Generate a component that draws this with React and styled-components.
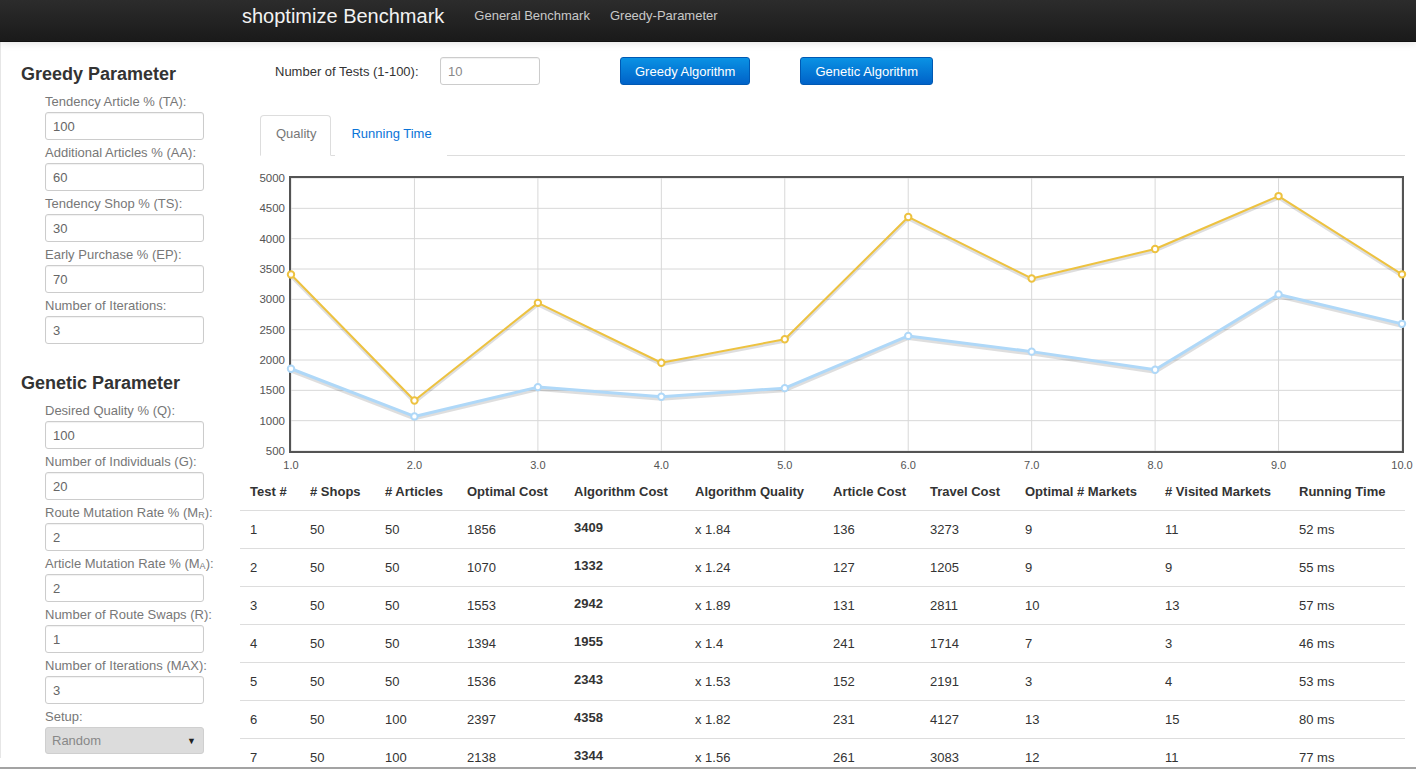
import React, { useState } from "react";
import styled, { createGlobalStyle } from "styled-components";

const GlobalStyle = createGlobalStyle`
  html, body {
    margin: 0;
    padding: 0;
    background: #fff;
    font-family: "Liberation Sans", Arial, sans-serif;
    font-size: 13px;
    color: #333;
  }
`;

const greedyFields = [
  { label: "Tendency Article % (TA):", value: "100" },
  { label: "Additional Articles % (AA):", value: "60" },
  { label: "Tendency Shop % (TS):", value: "30" },
  { label: "Early Purchase % (EP):", value: "70" },
  { label: "Number of Iterations:", value: "3" },
];

const geneticFields = [
  { label: "Desired Quality % (Q):", value: "100" },
  { label: "Number of Individuals (G):", value: "20" },
  { label: <>Route Mutation Rate % (M<sub>R</sub>):</>, value: "2" },
  { label: <>Article Mutation Rate % (M<sub>A</sub>):</>, value: "2" },
  { label: "Number of Route Swaps (R):", value: "1" },
  { label: "Number of Iterations (MAX):", value: "3" },
];

const columns = [
  { title: "Test #", width: 60 },
  { title: "# Shops", width: 75 },
  { title: "# Articles", width: 82 },
  { title: "Optimal Cost", width: 107 },
  { title: "Algorithm Cost", width: 121 },
  { title: "Algorithm Quality", width: 138 },
  { title: "Article Cost", width: 97 },
  { title: "Travel Cost", width: 95 },
  { title: "Optimal # Markets", width: 140 },
  { title: "# Visited Markets", width: 134 },
  { title: "Running Time", width: 116 },
];

// rows visible in the window
const rows = [
  [1, 50, 50, 1856, 3409, "x 1.84", 136, 3273, 9, 11, "52 ms"],
  [2, 50, 50, 1070, 1332, "x 1.24", 127, 1205, 9, 9, "55 ms"],
  [3, 50, 50, 1553, 2942, "x 1.89", 131, 2811, 10, 13, "57 ms"],
  [4, 50, 50, 1394, 1955, "x 1.4", 241, 1714, 7, 3, "46 ms"],
  [5, 50, 50, 1536, 2343, "x 1.53", 152, 2191, 3, 4, "53 ms"],
  [6, 50, 100, 2397, 4358, "x 1.82", 231, 4127, 13, 15, "80 ms"],
  [7, 50, 100, 2138, 3344, "x 1.56", 261, 3083, 12, 11, "77 ms"],
];

// chart series for all 10 tests
const algorithmCosts = [3409, 1332, 2942, 1955, 2343, 4358, 3344, 3830, 4702, 3412];
const optimalCosts = [1856, 1070, 1553, 1394, 1536, 2397, 2138, 1840, 3081, 2596];

// chart geometry (svg coords)
const PL = 51;
const PR = 1162;
const PT = 12;
const PB = 285;
const xPos = (i) => PL + ((PR - PL) * i) / 9;
const yPos = (v) => PT + ((5000 - v) * (PB - PT)) / 4500;
const yTicks = [5000, 4500, 4000, 3500, 3000, 2500, 2000, 1500, 1000, 500];

function Series({ data, color, width }) {
  const pts = data.map((v, i) => `${xPos(i)},${yPos(v)}`).join(" ");
  return (
    <g>
      <polyline points={pts} fill="none" stroke="rgba(0,0,0,0.13)" strokeWidth={width + 1} transform="translate(0,2)" strokeLinejoin="round" />
      <polyline points={pts} fill="none" stroke={color} strokeWidth={width} strokeLinejoin="round" />
      {data.map((v, i) => (
        <circle key={i} cx={xPos(i)} cy={yPos(v)} r="3.2" fill="#fff" stroke={color} strokeWidth="2" />
      ))}
    </g>
  );
}

function QualityChart() {
  return (
    <ChartSvg width="1165" height="307" viewBox="0 0 1165 307">
      {yTicks.map((t) => (
        <g key={t}>
          <line x1={PL} x2={PR} y1={yPos(t)} y2={yPos(t)} stroke="#d8d8d8" strokeWidth="1" />
          <text x="45" y={yPos(t) + 4} textAnchor="end" fontSize="11.5" fill="#545454">
            {t}
          </text>
        </g>
      ))}
      {Array.from({ length: 10 }).map((_, i) => (
        <g key={i}>
          <line x1={xPos(i)} x2={xPos(i)} y1={PT} y2={PB} stroke="#d8d8d8" strokeWidth="1" />
          <text x={xPos(i)} y="303" textAnchor="middle" fontSize="11" fill="#545454">
            {(i + 1).toFixed(1)}
          </text>
        </g>
      ))}
      <rect x={PL - 1} y={PT - 1} width={PR - PL + 2} height={PB - PT + 2} fill="none" stroke="#545454" strokeWidth="2" />
      <Series data={algorithmCosts} color="#edc240" width={2} />
      <Series data={optimalCosts} color="#afd8f8" width={3} />
    </ChartSvg>
  );
}

function Field({ label, value }) {
  return (
    <FieldGroup>
      <FieldLabel>{label}</FieldLabel>
      <TextInput defaultValue={value} />
    </FieldGroup>
  );
}

export default function App() {
  const [tab, setTab] = useState("quality");
  return (
    <Page>
      <GlobalStyle />
      <Navbar>
        <Brand>shoptimize Benchmark</Brand>
        <NavLinks>
          <NavLink>General Benchmark</NavLink>
          <NavLink>Greedy-Parameter</NavLink>
        </NavLinks>
      </Navbar>
      <Body>
        <Sidebar>
          <SideHeading>Greedy Parameter</SideHeading>
          <FieldList>
            {greedyFields.map((f, i) => (
              <Field key={i} {...f} />
            ))}
          </FieldList>
          <SideHeading $spaced>Genetic Parameter</SideHeading>
          <FieldList>
            {geneticFields.map((f, i) => (
              <Field key={i} {...f} />
            ))}
            <FieldGroup>
              <FieldLabel>Setup:</FieldLabel>
              <SelectBox>
                <span>Random</span>
                <Caret>▼</Caret>
              </SelectBox>
            </FieldGroup>
          </FieldList>
        </Sidebar>
        <Main>
          <Controls>
            <ControlLabel>Number of Tests (1-100):</ControlLabel>
            <TestsInput defaultValue="10" />
            <PrimaryButton $ml={80}>Greedy Algorithm</PrimaryButton>
            <PrimaryButton $ml={50}>Genetic Algorithm</PrimaryButton>
          </Controls>
          <Tabs>
            <Tab $active={tab === "quality"} onClick={() => setTab("quality")}>
              Quality
            </Tab>
            <Tab $active={tab === "time"} onClick={() => setTab("time")}>
              Running Time
            </Tab>
          </Tabs>
          <QualityChart />
          <Table>
            <colgroup>
              {columns.map((c) => (
                <col key={c.title} style={{ width: c.width }} />
              ))}
            </colgroup>
            <thead>
              <tr>
                {columns.map((c) => (
                  <Th key={c.title}>{c.title}</Th>
                ))}
              </tr>
            </thead>
            <tbody>
              {rows.map((r) => (
                <tr key={r[0]}>
                  {r.map((cell, i) => (
                    <Td key={i}>{i === 4 ? <Strong>{cell}</Strong> : cell}</Td>
                  ))}
                </tr>
              ))}
            </tbody>
          </Table>
        </Main>
      </Body>
    </Page>
  );
}

const Page = styled.div`
  height: 769px;
  overflow: hidden;
  box-sizing: border-box;
  border-bottom: 2px solid #a3a3a3;
`;

const Navbar = styled.div`
  height: 42px;
  box-sizing: border-box;
  padding: 4px 0 0 242px;
  display: flex;
  align-items: flex-start;
  background: linear-gradient(to bottom, #2c2c2c, #1a1a1a);
  border-bottom: 1px solid #111;
  box-shadow: 0 1px 8px rgba(0, 0, 0, 0.12);
  position: relative;
  z-index: 1;
`;

const Brand = styled.div`
  font-size: 20px;
  line-height: 24px;
  color: #f2f2f2;
`;

const NavLinks = styled.div`
  display: flex;
  margin-left: 20px;
`;

const NavLink = styled.a`
  padding: 0 10px;
  font-size: 13px;
  line-height: 24px;
  color: #c8c8c8;
  cursor: pointer;
`;

const Body = styled.div`
  display: flex;
  align-items: flex-start;
`;

const Sidebar = styled.div`
  width: 240px;
  flex: none;
  box-sizing: border-box;
  padding: 22px 0 0 20px;
  border-left: 1px solid #e6e6e6;
`;

const SideHeading = styled.h3`
  margin: ${(p) => (p.$spaced ? "29px" : "0")} 0 9px 0;
  font-size: 18px;
  line-height: 20px;
  font-weight: bold;
  color: #333;
`;

const FieldList = styled.div`
  padding-left: 24px;
`;

const FieldGroup = styled.div`
  margin-bottom: 4px;
`;

const FieldLabel = styled.div`
  font-size: 13px;
  line-height: 18px;
  color: #777;
  margin-bottom: 1px;
  white-space: nowrap;

  sub {
    font-size: 9px;
    vertical-align: -1px;
    line-height: 0;
  }
`;

const TextInput = styled.input`
  display: block;
  width: 159px;
  height: 28px;
  box-sizing: border-box;
  padding: 4px 7px;
  font-family: "Liberation Sans", Arial, sans-serif;
  font-size: 13px;
  color: #666;
  border: 1px solid #ccc;
  border-radius: 3px;
  box-shadow: inset 0 1px 1px rgba(0, 0, 0, 0.06);
  outline: none;
`;

const SelectBox = styled.div`
  width: 159px;
  height: 27px;
  box-sizing: border-box;
  padding: 0 7px 0 6px;
  display: flex;
  align-items: center;
  justify-content: space-between;
  font-size: 13px;
  color: #888;
  background: #dcdcdc;
  border: 1px solid #cfcfcf;
  border-radius: 3px;
`;

const Caret = styled.span`
  font-size: 9px;
  color: #222;
`;

const Main = styled.div`
  width: 1165px;
  flex: none;
  padding-top: 15px;
`;

const Controls = styled.div`
  display: flex;
  align-items: center;
  padding-left: 35px;
  height: 28px;
`;

const ControlLabel = styled.span`
  font-size: 13px;
  color: #333;
  width: 165px;
`;

const TestsInput = styled(TextInput)`
  width: 100px;
  height: 28px;
  color: #888;
`;

const PrimaryButton = styled.button`
  margin-left: ${(p) => p.$ml}px;
  height: 28px;
  padding: 0 14px;
  font-family: "Liberation Sans", Arial, sans-serif;
  font-size: 13px;
  color: #fff;
  background: linear-gradient(to bottom, #0a92e4, #0062c8);
  border: 1px solid #0059b3;
  border-radius: 3px;
  cursor: pointer;
`;

const Tabs = styled.div`
  display: flex;
  margin: 30px 0 0 20px;
  height: 40px;
  border-bottom: 1px solid #ddd;
`;

const Tab = styled.div`
  height: 41px;
  box-sizing: border-box;
  padding: 0 14px 0 15px;
  margin: 0 4px -1px 0;
  line-height: 35px;
  font-size: 13px;
  cursor: pointer;
  color: ${(p) => (p.$active ? "#777" : "#0a74d8")};
  background: #fff;
  border: 1px solid ${(p) => (p.$active ? "#ddd" : "transparent")};
  border-bottom-color: ${(p) => (p.$active ? "#fff" : "transparent")};
  border-radius: 4px 4px 0 0;
`;

const ChartSvg = styled.svg`
  display: block;
  margin-top: 10px;
  overflow: visible;
  font-family: "Liberation Sans", Arial, sans-serif;
`;

const Table = styled.table`
  width: 1165px;
  table-layout: fixed;
  border-collapse: collapse;
  font-size: 13px;
  color: #333;
`;

const Th = styled.th`
  text-align: left;
  font-weight: bold;
  padding: 8px 10px;
  line-height: 21px;
  white-space: nowrap;
`;

const Td = styled.td`
  padding: 8px 10px;
  line-height: 21px;
  border-top: 1px solid #ddd;
`;

const Strong = styled.strong`
  line-height: 13px;
  vertical-align: 2px;
`;
